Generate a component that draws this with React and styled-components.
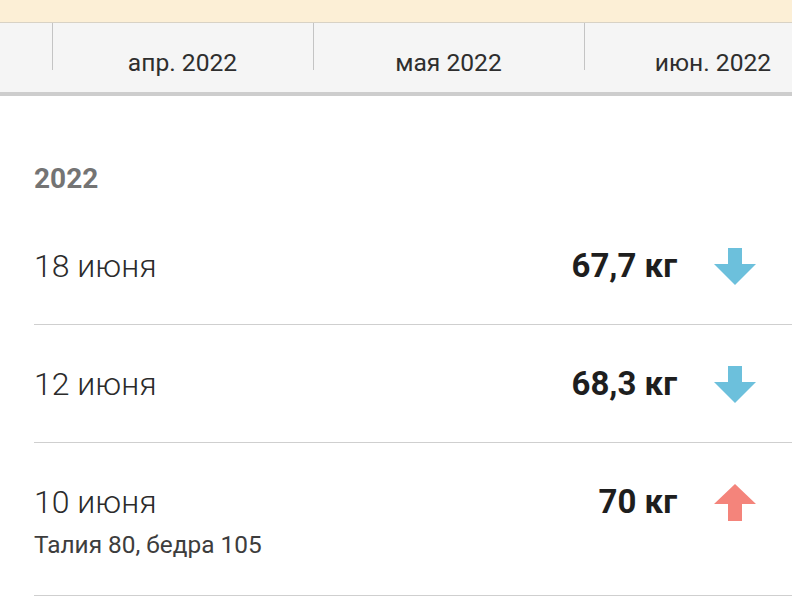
import React from "react";
import styled, { createGlobalStyle } from "styled-components";

const Global = createGlobalStyle`
  html, body { margin: 0; padding: 0; background: #fff; }
  body { font-family: Roboto, "Noto Sans", Arial, sans-serif; width: 792px; height: 600px; overflow: hidden; }
`;

const Page = styled.div`
  width: 792px;
  display: flex;
  flex-direction: column;
`;

const Banner = styled.div`
  height: 22px;
  background: #fcefd6;
  border-bottom: 1px solid #d8d2c5;
`;

const TabBar = styled.div`
  height: 69px;
  background: #f5f5f5;
  border-bottom: 4px solid #cdcdcd;
  display: flex;
  overflow: hidden;
`;

const Tab = styled.div`
  position: relative;
  flex: 0 0 ${(p) => p.$w}px;
  display: flex;
  align-items: center;
  justify-content: center;
  padding-top: 10px;
  box-sizing: border-box;
  font-size: 24.6px;
  color: #2e2e2e;
  white-space: nowrap;
  &::before {
    content: "";
    display: ${(p) => (p.$first ? "none" : "block")};
    position: absolute;
    left: 0;
    top: 0;
    width: 1px;
    height: 47px;
    background: #c4c4c4;
  }
`;

const List = styled.div`
  padding-left: 34px;
  display: flex;
  flex-direction: column;
`;

const YearHeader = styled.div`
  padding-top: 67px;
  margin-bottom: 12px;
  font-size: 28px;
  line-height: 32px;
  font-weight: 700;
  color: #747474;
`;

const Row = styled.div`
  display: flex;
  align-items: flex-start;
  padding: 39px 36px ${(p) => (p.$note ? 35 : 38)}px 0;
  border-bottom: 1px solid #cfcfcf;
`;

const DateCol = styled.div`
  flex: 1;
  display: flex;
  flex-direction: column;
`;

const DateText = styled.div`
  font-size: 32px;
  line-height: 40px;
  font-weight: 300;
  color: #2b2b2b;
`;

const Note = styled.div`
  font-size: 24.4px;
  line-height: 30px;
  color: #3d3d3d;
  margin-top: 8px;
`;

const Weight = styled.div`
  font-size: 33px;
  line-height: 40px;
  font-weight: 700;
  color: #1e1e1e;
`;

const ArrowBox = styled.div`
  width: 42px;
  height: 40px;
  margin-left: 37px;
  display: flex;
  align-items: center;
  justify-content: center;
`;

const Arrow = ({ up }) => (
  <svg width="42" height="37" viewBox="0 0 42 37">
    {up ? (
      <polygon points="21,0 42,20 28,20 28,37 14,37 14,20 0,20" fill="#f4847b" />
    ) : (
      <polygon points="14,0 28,0 28,16 42,16 21,37 0,16 14,16" fill="#6cc0dc" />
    )}
  </svg>
);

const tabs = [
  { w: 52, label: "", first: true },
  { w: 261, label: "апр. 2022" },
  { w: 271, label: "мая 2022" },
  { w: 258, label: "июн. 2022" },
];

const rows = [
  { date: "18 июня", weight: "67,7 кг", up: false },
  { date: "12 июня", weight: "68,3 кг", up: false },
  { date: "10 июня", weight: "70 кг", up: true, note: "Талия 80, бедра 105" },
];

export default function App() {
  return (
    <Page>
      <Global />
      <Banner />
      <TabBar>
        {tabs.map((t, i) => (
          <Tab key={i} $w={t.w} $first={t.first}>
            {t.label}
          </Tab>
        ))}
      </TabBar>
      <List>
        <YearHeader>2022</YearHeader>
        {rows.map((r) => (
          <Row key={r.date} $note={!!r.note}>
            <DateCol>
              <DateText>{r.date}</DateText>
              {r.note && <Note>{r.note}</Note>}
            </DateCol>
            <Weight>{r.weight}</Weight>
            <ArrowBox>
              <Arrow up={r.up} />
            </ArrowBox>
          </Row>
        ))}
      </List>
    </Page>
  );
}
